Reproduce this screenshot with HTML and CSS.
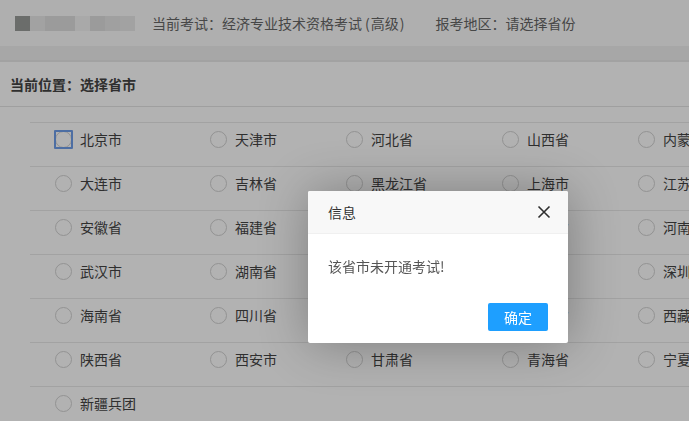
FILE: index.html
```html
<!DOCTYPE html>
<html lang="zh-CN">
<head>
<meta charset="utf-8">
<title>选择省市</title>
<link rel="stylesheet" href="styles.css">
</head>
<body>
<div class="page">
  <header class="header">
    <div class="logo">
      <span class="lb lb1"></span><span class="lb lb2"></span><span class="lb lb3"></span><span class="lb lb4"></span><span class="lb lb5"></span><span class="lb lb6"></span><span class="lb lb7"></span>
    </div>
    <span class="exam">当前考试：经济专业技术资格考试<span class="paren-open">(</span>高级<span class="paren-close">)</span></span>
    <span class="region">报考地区：请选择省份</span>
  </header>
  <div class="band"></div>
  <div class="crumb">当前位置：选择省市</div>
  <div class="list">
    <div class="row">
      <label class="item"><span class="radio focus"></span>北京市</label>
      <label class="item"><span class="radio"></span>天津市</label>
      <label class="item"><span class="radio"></span>河北省</label>
      <label class="item"><span class="radio"></span>山西省</label>
      <label class="item"><span class="radio"></span>内蒙古</label>
    </div>
    <div class="row">
      <label class="item"><span class="radio"></span>大连市</label>
      <label class="item"><span class="radio"></span>吉林省</label>
      <label class="item"><span class="radio"></span>黑龙江省</label>
      <label class="item"><span class="radio"></span>上海市</label>
      <label class="item"><span class="radio"></span>江苏省</label>
    </div>
    <div class="row">
      <label class="item"><span class="radio"></span>安徽省</label>
      <label class="item"><span class="radio"></span>福建省</label>
      <label class="item"><span class="radio"></span>江西省</label>
      <label class="item"><span class="radio"></span>山东省</label>
      <label class="item"><span class="radio"></span>河南省</label>
    </div>
    <div class="row">
      <label class="item"><span class="radio"></span>武汉市</label>
      <label class="item"><span class="radio"></span>湖南省</label>
      <label class="item"><span class="radio"></span>广东省</label>
      <label class="item"><span class="radio"></span>广西</label>
      <label class="item"><span class="radio"></span>深圳市</label>
    </div>
    <div class="row">
      <label class="item"><span class="radio"></span>海南省</label>
      <label class="item"><span class="radio"></span>四川省</label>
      <label class="item"><span class="radio"></span>贵州省</label>
      <label class="item"><span class="radio"></span>云南省</label>
      <label class="item"><span class="radio"></span>西藏</label>
    </div>
    <div class="row">
      <label class="item"><span class="radio"></span>陕西省</label>
      <label class="item"><span class="radio"></span>西安市</label>
      <label class="item"><span class="radio"></span>甘肃省</label>
      <label class="item"><span class="radio"></span>青海省</label>
      <label class="item"><span class="radio"></span>宁夏</label>
    </div>
    <div class="row">
      <label class="item"><span class="radio"></span>新疆兵团</label>
    </div>
  </div>
</div>

<div class="shade"></div>
<div class="dialog">
  <div class="dialog-title">信息
    <span class="dialog-close">
      <svg width="16" height="16" viewBox="0 0 16 16"><path d="M2.5 2.5 L13.5 13.5 M13.5 2.5 L2.5 13.5" stroke="#2f2f2f" stroke-width="1.6" fill="none"/></svg>
    </span>
  </div>
  <div class="dialog-content">该省市未开通考试!</div>
  <div class="dialog-btns"><a class="btn-primary">确定</a></div>
</div>
</body>
</html>
```

FILE: styles.css
```css
html, body {
  margin: 0;
  padding: 0;
  background: #fff;
}
body {
  font-family: "Noto Sans CJK SC", "Noto Sans", "Liberation Sans", sans-serif;
  font-size: 14px;
  color: #333;
  overflow: hidden;
}
.page {
  width: 689px;
}
.header {
  height: 46px;
  display: flex;
  align-items: center;
  padding-left: 15px;
  background: #fbfbfb;
  color: #666;
  white-space: nowrap;
}
.logo {
  display: flex;
  height: 15px;
  width: 120px;
}
.lb { display: block; height: 15px; }
.lb1 { width: 15px; background: #9a9c9a; }
.lb2 { width: 15px; background: #e9e9e9; }
.lb3 { width: 30px; background: #dfdfdf; }
.lb4 { width: 15px; background: #f3f3f3; }
.lb5 { width: 15px; background: #dfdfdf; }
.lb6 { width: 15px; background: #e6e6e6; }
.lb7 { width: 15px; background: #e9e9e9; }
.exam {
  margin-left: 17px;
}
.paren-open {
  margin: 0 1px 0 3px;
}
.paren-close {
  margin: 0 0 0 1px;
}
.region {
  margin-left: 31px;
}
.band {
  height: 14px;
  background: #f0f0f0;
  border-bottom: 2px solid #e8e8e8;
}
.crumb {
  height: 44px;
  line-height: 44px;
  padding-left: 10px;
  font-weight: bold;
  color: #444;
  border-bottom: 1px solid #e4e4e4;
}
.list {
  margin-left: 30px;
  padding-top: 15px;
}
.row {
  box-sizing: border-box;
  height: 44px;
  border-top: 1px solid #e8e8e8;
  padding: 7px 0 0 25px;
  display: grid;
  grid-template-columns: 155px 136px 156px 136px 156px;
  white-space: nowrap;
}
.item {
  display: flex;
  align-items: center;
  height: 18px;
  line-height: 18px;
  color: #444;
}
.radio {
  box-sizing: border-box;
  width: 17px;
  height: 17px;
  border: 1px solid #d2d2d2;
  border-radius: 50%;
  margin-right: 8px;
  flex: none;
}
.radio.focus {
  position: relative;
}
.radio.focus::before {
  content: "";
  position: absolute;
  left: -2px;
  top: -2px;
  right: -2px;
  bottom: -2px;
  border: 2px solid #6f9eea;
  border-radius: 1px;
}
.shade {
  position: fixed;
  inset: 0;
  background: rgba(0, 0, 0, 0.3);
}
.dialog {
  position: fixed;
  left: 308px;
  top: 191px;
  width: 260px;
  background: #fff;
  border-radius: 2px;
  box-shadow: 1px 1px 50px rgba(0, 0, 0, 0.3);
}
.dialog-title {
  position: relative;
  height: 42px;
  line-height: 42px;
  padding-left: 20px;
  background: #f8f8f8;
  border-bottom: 1px solid #f0f0f0;
  border-radius: 2px 2px 0 0;
  color: #333;
}
.dialog-close {
  position: absolute;
  right: 16px;
  top: 13px;
  width: 16px;
  height: 16px;
  line-height: 0;
}
.dialog-content {
  padding: 20px;
  line-height: 24px;
  color: #555;
}
.dialog-btns {
  padding: 0 20px 12px;
  text-align: right;
}
.btn-primary {
  display: inline-block;
  box-sizing: border-box;
  margin-top: 5px;
  height: 28px;
  line-height: 28px;
  width: 60px;
  text-align: center;
  background: #1e9fff;
  color: #fff;
  border-radius: 2px;
  vertical-align: top;
}
```
